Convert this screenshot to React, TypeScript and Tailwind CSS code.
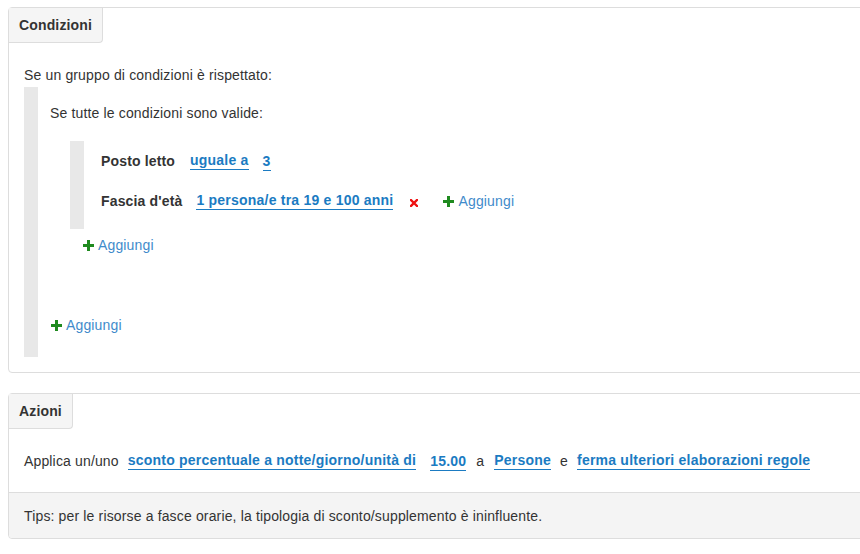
import type { ReactNode } from 'react';

function PlusIcon() {
  return (
    <svg width="11" height="11" viewBox="0 0 11 11" className="shrink-0">
      <path d="M4 0h3v4h4v3H7v4H4V7H0V4h4z" fill="#1f8a1f" />
    </svg>
  );
}

function RemoveIcon() {
  return (
    <svg width="8" height="8" viewBox="0 0 8 8" className="shrink-0">
      <path d="M1 1l6 6M7 1L1 7" stroke="#ee1111" strokeWidth="2.4" strokeLinecap="square" />
    </svg>
  );
}

function Editable({ children }: { children: ReactNode }) {
  return (
    <span className="inline-block font-bold tracking-[0.22px] text-[#1b7bc2] leading-[17px] border-b border-[#1b7bc2]">
      {children}
    </span>
  );
}

function AddLink() {
  return (
    <span className="flex items-center gap-[4px] text-[#3f8bcb] leading-[18px]">
      <PlusIcon />
      Aggiungi
    </span>
  );
}

function PanelTab({ title }: { title: string }) {
  return (
    <div className="w-fit h-[35px] bg-[#f5f5f5] border-r border-b border-[#ddd] rounded-br-[4px] px-[10px] font-bold leading-[34px]">
      {title}
    </div>
  );
}

export default function App() {
  return (
    <div className="min-h-[554px] bg-white pl-2 pt-[7px] overflow-hidden font-['Liberation_Sans',Arial,sans-serif] text-[14px] tracking-[0.15px] text-[#333]">
      {/* Condizioni */}
      <section className="w-[900px] border border-[#ddd] rounded-[4px]">
        <PanelTab title="Condizioni" />
        <div className="pl-[15px] pt-[23px] pb-[15px]">
          <p className="leading-[18px]">Se un gruppo di condizioni è rispettato:</p>
          <div className="flex mt-[3px]">
            <div className="w-[14px] bg-[#e8e8e8]" />
            <div className="pl-3 pt-[17px] pb-[23px]">
              <p className="leading-[18px]">Se tutte le condizioni sono valide:</p>
              <div className="flex mt-[19px] ml-[20px]">
                <div className="w-[14px] bg-[#e8e8e8]" />
                <div className="pl-[17px] pt-[11px] pb-[19px]">
                  <div className="flex items-center h-[18px]">
                    <span className="font-bold mr-[15px]">Posto letto</span>
                    <Editable>uguale a</Editable>
                    <span className="ml-[14px]">
                      <Editable>3</Editable>
                    </span>
                  </div>
                  <div className="flex items-center h-[18px] mt-[22px]">
                    <span className="font-bold mr-[14px]">Fascia d'età</span>
                    <Editable>1 persona/e tra 19 e 100 anni</Editable>
                    <span className="ml-[17px] mt-[4px]">
                      <RemoveIcon />
                    </span>
                    <span className="ml-[25px]">
                      <AddLink />
                    </span>
                  </div>
                </div>
              </div>
              <div className="mt-[7px] ml-[33px]">
                <AddLink />
              </div>
              <div className="mt-[62px] ml-[1px]">
                <AddLink />
              </div>
            </div>
          </div>
        </div>
      </section>

      {/* Azioni */}
      <section className="w-[900px] mt-5 border border-[#ddd] rounded-[4px]">
        <PanelTab title="Azioni" />
        <div className="pl-[15px] pt-[23px] pb-[22px]">
          <div className="flex items-center h-[18px]">
            <span className="mr-[9px]">Applica un/uno</span>
            <Editable>sconto percentuale a notte/giorno/unità di</Editable>
            <span className="ml-[14px]">
              <Editable>15.00</Editable>
            </span>
            <span className="mx-[10px]">a</span>
            <Editable>Persone</Editable>
            <span className="mx-[9px]">e</span>
            <Editable>ferma ulteriori elaborazioni regole</Editable>
          </div>
        </div>
        <div className="border-t border-[#ddd] bg-[#f4f4f4] pl-[15px] pt-[14px] pb-[13px] leading-[18px] rounded-bl-[4px]">
          Tips: per le risorse a fasce orarie, la tipologia di sconto/supplemento è ininfluente.
        </div>
      </section>
    </div>
  );
}
